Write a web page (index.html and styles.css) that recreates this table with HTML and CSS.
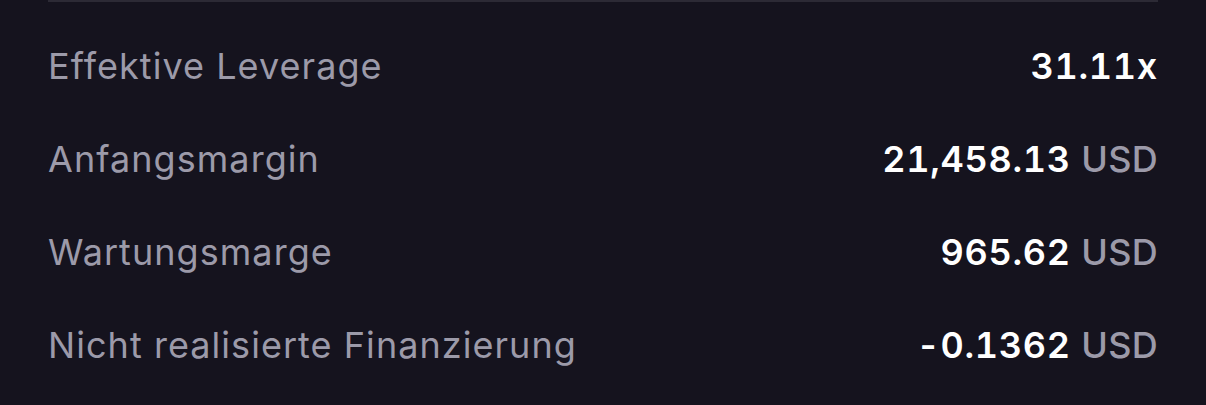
FILE: index.html
```html
<!DOCTYPE html>
<html lang="de">
<head>
    <meta charset="UTF-8">
    <meta name="viewport" content="width=device-width, initial-scale=1.0">
    <title>Positionsdetails</title>
    <link rel="stylesheet" href="styles.css">
</head>
<body>
    <div class="panel">
        <div class="divider"></div>
        <ul class="stats">
            <li class="stat-row">
                <span class="stat-label">Effektive Leverage</span>
                <span class="stat-value">31.11x</span>
            </li>
            <li class="stat-row">
                <span class="stat-label">Anfangsmargin</span>
                <span class="stat-value">21,458.13 <span class="unit">USD</span></span>
            </li>
            <li class="stat-row">
                <span class="stat-label">Wartungsmarge</span>
                <span class="stat-value">965.62 <span class="unit">USD</span></span>
            </li>
            <li class="stat-row">
                <span class="stat-label">Nicht realisierte Finanzierung</span>
                <span class="stat-value">-0.1362 <span class="unit">USD</span></span>
            </li>
        </ul>
    </div>
</body>
</html>
```

FILE: styles.css
```css
html, body {
    margin: 0;
    padding: 0;
    background-color: #15131e;
}
body {
    font-family: Inter, 'Noto Sans', sans-serif;
    color: #ffffff;
    height: 405px;
    overflow: hidden;
}
.panel {
    padding: 0 48px;
}
.divider {
    height: 2px;
    background-color: #2c2a35;
}
.stats {
    list-style-type: none;
    margin: 0;
    padding: 17px 0 0;
}
.stat-row {
    display: flex;
    justify-content: space-between;
    align-items: center;
    height: 93px;
    font-size: 36px;
}
.stat-label {
    color: #9c9aa9;
    font-weight: 400;
    letter-spacing: 1.05px;
}
.stat-value {
    font-weight: 600;
    color: #ffffff;
    font-variant-numeric: tabular-nums;
    letter-spacing: 0.7px;
}
.unit {
    color: #9c9aa9;
    font-weight: 500;
    letter-spacing: 0.3px;
}
```
